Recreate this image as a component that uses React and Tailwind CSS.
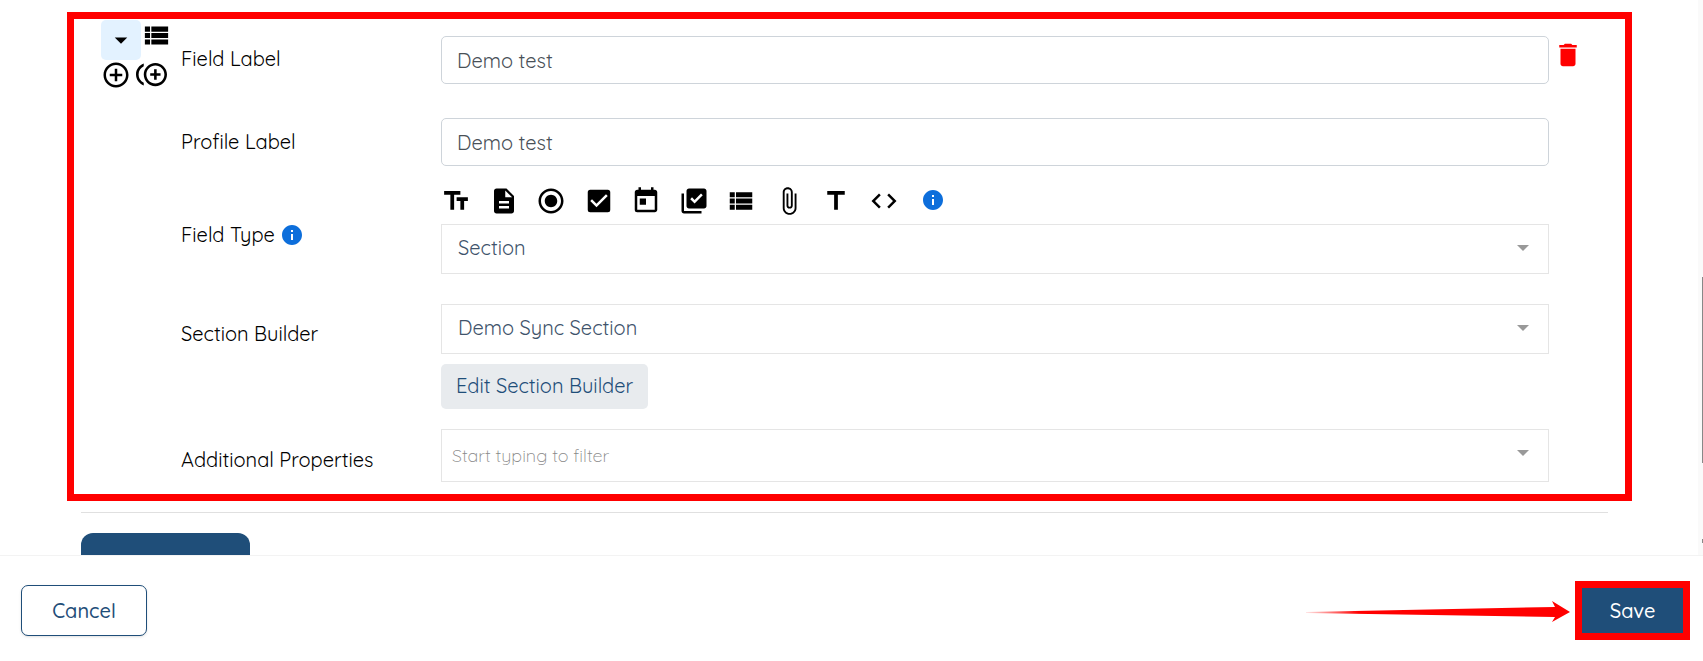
import {
  MdAddCircleOutline,
  MdArrowDropDown,
  MdAttachFile,
  MdCheckBox,
  MdCode,
  MdControlPointDuplicate,
  MdDelete,
  MdDescription,
  MdInfo,
  MdLibraryAddCheck,
  MdRadioButtonChecked,
  MdTextFields,
  MdTitle,
  MdToday,
  MdViewList,
} from "react-icons/md";

const FIELD_TYPES = [
  { name: "Text", Icon: MdTextFields },
  { name: "Document", Icon: MdDescription },
  { name: "Radio", Icon: MdRadioButtonChecked },
  { name: "Checkbox", Icon: MdCheckBox },
  { name: "Date", Icon: MdToday },
  { name: "Multi select", Icon: MdLibraryAddCheck },
  { name: "List", Icon: MdViewList },
  { name: "Attachment", Icon: MdAttachFile },
  { name: "Title", Icon: MdTitle },
  { name: "Code", Icon: MdCode },
];

function Row({ id, label, labelClass, info, trailing, children }) {
  return (
    <div className="flex items-start">
      <div className={`flex w-[260px] shrink-0 items-center gap-[5px] ${labelClass}`}>
        <label htmlFor={id} className="text-[20px] leading-6 text-black">
          {label}
        </label>
        {info && <MdInfo className="size-6 text-[#0d6edb]" />}
      </div>
      <div className="min-w-0 flex-1">{children}</div>
      <div className="w-[76px] shrink-0">{trailing}</div>
    </div>
  );
}

function Caret() {
  return (
    <svg
      viewBox="0 0 12 6"
      className="pointer-events-none absolute top-[21px] right-[20px] h-[6px] w-3 fill-[#999]"
      aria-hidden="true"
    >
      <path d="M0 0h12L6 6z" />
    </svg>
  );
}

function TextBox({ id }) {
  return (
    <input
      id={id}
      type="text"
      defaultValue="Demo test"
      className="block h-12 w-full rounded-[5px] border border-[#ced4da] bg-white px-[15px] text-[20px] text-[#495057] outline-none"
    />
  );
}

function Select({ id, value }) {
  return (
    <div className="relative">
      <select
        id={id}
        className="block h-[50px] w-full appearance-none border border-[#e5e5e5] bg-white px-4 pb-[2px] text-[20px] text-[#40536b] outline-none"
      >
        <option>{value}</option>
      </select>
      <Caret />
    </div>
  );
}

export default function App() {
  return (
    <div className="flex h-screen flex-col bg-white font-['Quicksand','Lato',sans-serif] font-normal">
      <div className="flex min-h-0 flex-1">
        <main className="min-w-0 flex-1 overflow-hidden pt-3 pr-[66px] pl-[67px]">
          <section className="flex border-[7px] border-[#ff0000] pb-3">
            <div className="w-[107px] shrink-0 pt-px pl-[27px]">
              <div className="flex h-[39px]">
                <button
                  type="button"
                  aria-label="Collapse"
                  className="flex size-10 items-center justify-center rounded-[5px] bg-[#e3f2ff]"
                >
                  <MdArrowDropDown className="size-[30px]" />
                </button>
                <button type="button" aria-label="Section list" className="h-[30px]">
                  <MdViewList className="size-[31px]" />
                </button>
              </div>
              <div className="flex items-center gap-[5px]">
                <button type="button" aria-label="Add">
                  <MdAddCircleOutline className="size-[30px]" />
                </button>
                <button type="button" aria-label="Duplicate">
                  <MdControlPointDuplicate className="size-[31px]" />
                </button>
              </div>
            </div>
            <div className="min-w-0 flex-1 pt-[17px]">
              <Row
                id="field-label"
                label="Field Label"
                labelClass="pt-[11px]"
                trailing={
                  <button type="button" aria-label="Delete" className="mt-1 ml-1 block">
                    <MdDelete className="size-[30px] text-[#ff0000]" />
                  </button>
                }
              >
                <TextBox id="field-label" />
              </Row>
              <div className="pt-[34px]">
                <Row id="profile-label" label="Profile Label" labelClass="pt-3">
                  <TextBox id="profile-label" />
                </Row>
              </div>
              <div className="pt-5">
                <Row id="field-type" label="Field Type" labelClass="pt-[37px]" info>
                  <div className="flex items-start gap-[22px] pb-2">
                    <div className="flex w-[458px] justify-between">
                      {FIELD_TYPES.map(({ name, Icon }) => (
                        <button key={name} type="button" aria-label={name}>
                          <Icon className="size-[30px]" />
                        </button>
                      ))}
                    </div>
                    <MdInfo className="mt-[2px] size-6 text-[#0d6edb]" />
                  </div>
                  <Select id="field-type" value="Section" />
                </Row>
              </div>
              <div className="pt-[30px]">
                <Row id="section-builder" label="Section Builder" labelClass="pt-[18px]">
                  <Select id="section-builder" value="Demo Sync Section" />
                  <button
                    type="button"
                    className="mt-[10px] block h-[45px] rounded-[5px] bg-[#e8ebee] px-[15px] pb-[2px] text-[20px] text-[#1f4e79]"
                  >
                    Edit Section Builder
                  </button>
                </Row>
              </div>
              <div className="pt-5">
                <Row id="additional" label="Additional Properties" labelClass="pt-[19px]">
                  <div className="relative">
                    <input
                      id="additional"
                      type="text"
                      placeholder="Start typing to filter"
                      className="block h-[53px] w-full border border-[#e5e5e5] bg-white px-[10px] text-[18px] font-light outline-none placeholder:text-[#888]"
                    />
                    <Caret />
                  </div>
                </Row>
              </div>
            </div>
          </section>
          <hr className="mt-[11px] mr-[24px] ml-[14px] border-[#e0e0e0]" />
          <button
            type="button"
            aria-label="Add field"
            className="mt-5 ml-[14px] block h-[50px] w-[169px] rounded-[12px] bg-[#1f4e79]"
          />
        </main>
        <div className="flex w-[5px] flex-col items-end bg-[#fafafa] pt-[277px]">
          <div className="h-[186px] w-px bg-[#888]" />
          <div className="mt-[76px] h-1 w-px bg-[#888]" />
        </div>
      </div>
      <footer className="flex shrink-0 items-center justify-between border-t border-[#f3f3f3] pt-[25px] pr-[13px] pb-[21px] pl-[21px] font-medium">
        <button
          type="button"
          className="h-[51px] w-[126px] rounded-[7px] border border-[#1f4e79] bg-white text-[20px] text-[#1f4e79] shadow-sm"
        >
          Cancel
        </button>
        <div className="flex items-center gap-[5px]">
          <svg viewBox="0 0 264 22" className="h-[22px] w-[264px]" aria-hidden="true">
            <defs>
              <linearGradient id="tail" x1="0" x2="1" y1="0" y2="0">
                <stop offset="0" stopColor="#f00" stopOpacity="0.1" />
                <stop offset="0.2" stopColor="#f00" />
              </linearGradient>
            </defs>
            <path
              fill="url(#tail)"
              d="M0 12 L249 7 L246 1 L264 12 L246 22 L249 17 L0 13z"
            />
          </svg>
          <button
            type="button"
            className="h-[59px] w-[115px] border-[7px] border-[#ff0000] bg-[#1f4e79] text-[20px] text-white"
          >
            Save
          </button>
        </div>
      </footer>
    </div>
  );
}
